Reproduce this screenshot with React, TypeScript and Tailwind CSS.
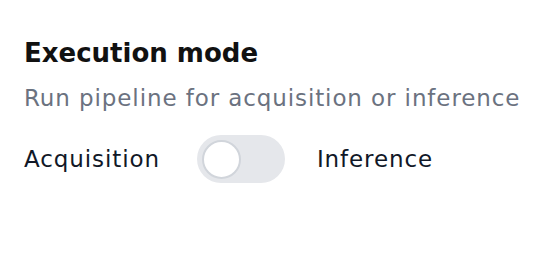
import { useState } from "react";

export default function App() {
    const [inference, setInference] = useState(false);

    return (
        <div className="w-[546px] h-[270px] bg-white px-6 pt-[35px] font-['DejaVu_Sans','Noto_Sans',sans-serif]">
            <h2 className="text-[26px] leading-[36px] font-bold text-[#111111]">Execution mode</h2>
            <p className="text-[23px] leading-[30px] mt-[12px] tracking-[0.9px] text-[#6b7280]">Run pipeline for acquisition or inference</p>
            <div className="flex items-center mt-[22px]">
                <span className="text-[23px] tracking-[0.9px] text-[#111827]">Acquisition</span>
                <button
                    type="button"
                    onClick={() => setInference(!inference)}
                    className={`ml-[37px] w-[88px] h-[48px] rounded-full p-[5px] flex items-center ${inference ? 'bg-[#2563eb] justify-end' : 'bg-[#e5e7eb] justify-start'}`}
                >
                    <span className="w-[39px] h-[39px] rounded-full bg-white border-2 border-[#d1d5db]" />
                </button>
                <span className="ml-[32px] text-[23px] tracking-[0.9px] text-[#111827]">Inference</span>
            </div>
        </div>
    );
}
